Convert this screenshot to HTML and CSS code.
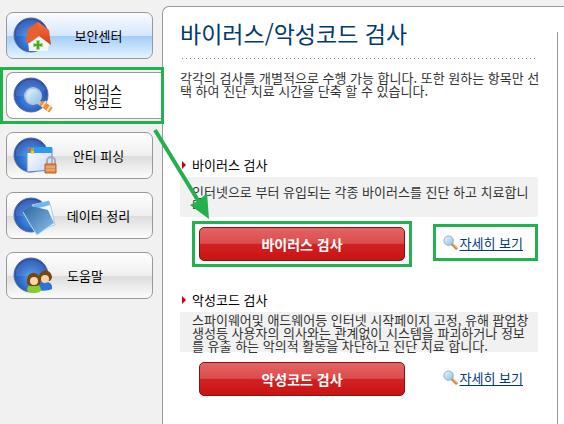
FILE: index.html
```
<!DOCTYPE html>
<html lang="ko">
<head>
    <meta charset="UTF-8">
    <meta name="viewport" content="width=device-width, initial-scale=1.0">
    <title>바이러스/악성코드 검사</title>
    <link rel="stylesheet" href="styles.css">
</head>
<body>
    <!-- shared gradients and symbols -->
    <svg class="defs" width="0" height="0" aria-hidden="true">
        <defs>
            <radialGradient id="globe" cx="0.5" cy="0.6" r="0.6">
                <stop offset="0" stop-color="#4fa3ea"/>
                <stop offset="0.5" stop-color="#2f6fd0"/>
                <stop offset="1" stop-color="#2147a4"/>
            </radialGradient>
            <linearGradient id="roof" x1="0" y1="0" x2="0" y2="1">
                <stop offset="0" stop-color="#f7703a"/>
                <stop offset="1" stop-color="#d2401a"/>
            </linearGradient>
            <linearGradient id="glass" x1="0" y1="0" x2="1" y2="1">
                <stop offset="0" stop-color="#f0faff"/>
                <stop offset="1" stop-color="#7fbfe6"/>
            </linearGradient>
            <linearGradient id="folder" x1="0" y1="0" x2="1" y2="1">
                <stop offset="0" stop-color="#2f679f"/>
                <stop offset="1" stop-color="#8cc2ee"/>
            </linearGradient>
            <linearGradient id="window" x1="0" y1="0" x2="1" y2="1">
                <stop offset="0" stop-color="#ffffff"/>
                <stop offset="1" stop-color="#c9d3fb"/>
            </linearGradient>
            <symbol id="ball" viewBox="0 0 44 40">
                <circle cx="18" cy="19" r="17" fill="url(#globe)" stroke="#5b6d96" stroke-width="1"/>
                <path d="M3 14a16 16 0 0 1 30 0c-9 6-19 7-30 6z" fill="#ffffff" opacity="0.1"/>
            </symbol>
            <symbol id="lens" viewBox="0 0 16 16">
                <path d="M9 9l6 6" stroke="#d9823b" stroke-width="3"/>
                <path d="M10 9l5 5" stroke="#f8c48c" stroke-width="1"/>
                <circle cx="6" cy="6" r="5" fill="url(#glass)" stroke="#93a9b8" stroke-width="1"/>
            </symbol>
        </defs>
    </svg>

    <div class="layout">
        <nav class="menu">
            <button type="button" class="menu-btn home">
                <svg class="icon" viewBox="0 0 44 40" aria-hidden="true">
                    <use href="#ball"/>
                    <path d="M15 25l10-7 11 9-1 8-19 0z" fill="#f4f5f7"/>
                    <path d="M25 6l11 8 2 15-12-9-10 7-3-1 2-13z" fill="url(#roof)"/>
                    <path d="M25 6l-10 7-2 13 3 1 10-7z" fill="#e85f30"/>
                    <path d="M25 24v10M20 29h10" stroke="#a5e07c" stroke-width="4"/>
                    <path d="M25 25v8M21 29h8" stroke="#4ba52a" stroke-width="2"/>
                </svg>
                <span class="label">보안센터</span>
            </button>
            <button type="button" class="menu-btn active" aria-current="page">
                <svg class="icon" viewBox="0 0 44 40" aria-hidden="true">
                    <use href="#ball"/>
                    <path d="M25 26l5 3" stroke="#b9c3cf" stroke-width="4"/>
                    <path d="M28 27l10 7" stroke="#f18a35" stroke-width="6"/>
                    <path d="M29 31l4-6M34 35l4-6" stroke="#fbe0bd" stroke-width="2"/>
                    <circle cx="20" cy="20" r="8" fill="url(#glass)" stroke="#b5c3d4" stroke-width="2"/>
                </svg>
                <span class="label">바이러스<br>악성코드</span>
            </button>
            <button type="button" class="menu-btn">
                <svg class="icon" viewBox="0 0 44 40" aria-hidden="true">
                    <use href="#ball"/>
                    <path d="M14 12h25v22l-25 2z" fill="url(#window)" stroke="#4f8fe0" stroke-width="1"/>
                    <path d="M14 11h25v6h-25z" fill="#2c9af0"/>
                    <path d="M15 12h3v3h-3z" fill="#ee5a2c"/>
                    <path d="M18 12h3v3h-3z" fill="#7cc142"/>
                    <path d="M18 15h3v3h-3z" fill="#f7d038"/>
                    <path d="M34 28v-3a4 4 0 0 1 8 0v3" fill="none" stroke="#a7abb2" stroke-width="2"/>
                    <path d="M32 28h11v9h-11z" fill="#e08a4c" stroke="#b5612b" stroke-width="1"/>
                    <path d="M33 31h9M33 34h9" stroke="#f3bd8e" stroke-width="1"/>
                </svg>
                <span class="label">안티 피싱</span>
            </button>
            <button type="button" class="menu-btn">
                <svg class="icon" viewBox="0 0 44 40" aria-hidden="true">
                    <use href="#ball"/>
                    <path d="M19 9l17-4 2 6 4 18-14 4z" fill="#f2f8fd" stroke="#a8cdea" stroke-width="1"/>
                    <path d="M20 9l16-4 1 4-15 4z" fill="#6db8f2"/>
                    <path d="M18 10l17 4 6 13-17 12-7-10-7-14z" fill="url(#folder)"/>
                    <path d="M10 16l8 14 6 9 17-12" fill="none" stroke="#b9dcf6" stroke-width="1"/>
                </svg>
                <span class="label">데이터 정리</span>
            </button>
            <button type="button" class="menu-btn help">
                <svg class="icon" viewBox="0 0 44 40" aria-hidden="true">
                    <use href="#ball"/>
                    <path d="M25 32c0-8 14-8 14-1v2c-4 2-10 2-14 1z" fill="#2d73dc"/>
                    <path d="M26 22c0-10 13-10 13 0l-2 3h-9z" fill="#7c4410"/>
                    <circle cx="32" cy="23" r="4" fill="#fbd6a4"/>
                    <path d="M14 34c0-8 14-8 14 0 0 4-14 4-14 0z" fill="#86cc2e"/>
                    <path d="M14 28c-2-15 15-15 13 0l-3 2h-7z" fill="#7c4410"/>
                    <circle cx="21" cy="25" r="4" fill="#fbd6a4"/>
                </svg>
                <span class="label">도움말</span>
            </button>
        </nav>

        <main class="panel">
            <div class="content">
                <h1>바이러스/악성코드 검사</h1>
                <p class="intro">각각의 검사를 개별적으로 수행 가능 합니다. 또한 원하는 항목만 선<br>택 하여 진단 치료 시간을 단축 할 수 있습니다.</p>

                <section class="scan">
                    <h2>바이러스 검사</h2>
                    <p class="desc short">인터넷으로 부터 유입되는 각종 바이러스를 진단 하고 치료합니<br>다.</p>
                    <div class="actions">
                        <div class="scan-action marked">
                            <button type="button" class="scan-btn">바이러스 검사</button>
                        </div>
                        <div class="more marked">
                            <a href="#virus"><svg class="lens" aria-hidden="true"><use href="#lens"/></svg><span>자세히 보기</span></a>
                        </div>
                    </div>
                </section>

                <section class="scan">
                    <h2>악성코드 검사</h2>
                    <p class="desc">스파이웨어및 애드웨어등 인터넷 시작페이지 고정, 유해 팝업창<br>생성등 사용자의 의사와는 관계없이 시스템을 파괴하거나 정보<br>를 유출 하는 악의적 활동을 차단하고 진단 치료 합니다.</p>
                    <div class="actions">
                        <div class="scan-action">
                            <button type="button" class="scan-btn">악성코드 검사</button>
                        </div>
                        <div class="more">
                            <a href="#malware"><svg class="lens" aria-hidden="true"><use href="#lens"/></svg><span>자세히 보기</span></a>
                        </div>
                    </div>
                </section>
            </div>
            <div class="edge"></div>
        </main>

        <!-- arrow from the menu to the scan button -->
        <svg class="arrow" viewBox="0 0 58 94" aria-hidden="true">
            <path d="M2 2L46 74" stroke="#22b14c" stroke-width="4"/>
            <path d="M56 91L37 77l8-4 9-8z" fill="#22b14c"/>
        </svg>
    </div>
</body>
</html>
```

FILE: styles.css
```
* {
    box-sizing: border-box;
}

body {
    margin: 0;
    background: #f1f1f1;
    color: #333;
    font-family: "Noto Sans CJK KR", sans-serif;
    font-size: 13px;
    line-height: 13px;
}

button {
    font-family: inherit;
    cursor: pointer;
}

h1, h2, p {
    margin: 0;
    font-weight: normal;
}

.defs {
    position: absolute;
}

.layout {
    position: relative;
    display: flex;
    min-height: 100vh;
    overflow: hidden;
}

/* left menu */
.menu {
    flex: none;
    display: flex;
    flex-direction: column;
    gap: 13px;
    width: 162px;
    padding: 12px 9px 12px 6px;
}

.menu-btn {
    display: flex;
    align-items: center;
    height: 47px;
    padding: 0 12px 0 6px;
    border: 1px solid #999;
    border-radius: 7px;
    background: linear-gradient(#fff, #efefef 50%, #dcdcdc 51%, #fcfcfc);
    color: #000;
    font-size: 13px;
    line-height: 13px;
}

.menu-btn.home {
    background: linear-gradient(#fafcff, #d5e7fb 50%, #a3cdf7 51%, #e4f4ff);
}

.menu-btn.active {
    position: relative;
    z-index: 1;
    margin-right: -10px;
    padding-right: 24px;
    border-right: none;
    border-radius: 7px 0 0 7px;
    background: #fff;
}

.menu-btn.active::after {
    content: "";
    position: absolute;
    inset: -6px -1px -6px -7px;
    border: 3px solid #22b14c;
}

.icon {
    flex: none;
    width: 44px;
    height: 40px;
}

.label {
    flex: 1;
    text-align: center;
}

.help .label {
    padding-left: 10px;
    text-align: left;
}

/* right panel */
.panel {
    flex: 1;
    display: flex;
    min-width: 0;
    margin-top: 6px;
    border: 1px solid #999;
    border-width: 1px 0 0 1px;
    border-radius: 7px 0 0 0;
    background: #fff;
}

.content {
    flex: 1;
    min-width: 0;
    padding: 13px 19px 0 17px;
}

.edge {
    flex: none;
    width: 7px;
    margin-top: 25px;
    border-left: 1px solid #999;
}

h1 {
    height: 39px;
    color: #003a70;
    font-size: 23px;
    line-height: 26px;
    background: repeating-linear-gradient(90deg, transparent 0 2px, #888 2px 3px, transparent 3px 4px) left bottom / 100% 1px no-repeat;
}

.intro {
    margin-top: 12px;
    white-space: nowrap;
}

h2 {
    position: relative;
    padding-left: 12px;
    color: #000;
    font-size: 13px;
    line-height: 18px;
}

h2::before {
    content: "";
    position: absolute;
    left: 2px;
    top: 5px;
    border: 4px solid transparent;
    border-left-color: #c00;
    border-right: none;
}

.scan {
    margin-top: 30px;
}

.intro + .scan {
    margin-top: 59px;
}

.desc {
    min-height: 40px;
    margin-top: 3px;
    padding: 1px 0 0 12px;
    border-radius: 2px;
    background: #f1f1f1;
    white-space: nowrap;
}

.desc.short {
    padding-top: 8px;
}

.actions {
    display: flex;
    align-items: flex-start;
    justify-content: space-between;
    margin-top: 10px;
    padding: 0 15px 0 19px;
}

.scan-action {
    position: relative;
    flex: 0 1 206px;
}

.scan-btn {
    display: block;
    width: 100%;
    height: 34px;
    padding: 0;
    border: 1px solid #841414;
    border-radius: 5px;
    background: linear-gradient(#e36464, #dc4c4c 48%, #d02323 50%, #cc1212);
    color: #fff;
    font-size: 14px;
    font-weight: bold;
}

.more {
    position: relative;
    margin-top: 8px;
}

.more a {
    display: flex;
    align-items: center;
    gap: 2px;
    color: #003a7d;
    text-decoration: none;
}

.more span {
    text-decoration: underline;
    text-underline-offset: 2px;
}

.lens {
    width: 15px;
    height: 15px;
}

/* green frames */
.marked::after {
    content: "";
    position: absolute;
    inset: -6px -7px;
    border: 3px solid #22b14c;
    pointer-events: none;
}

.more.marked::after {
    inset: -11px -15px -11px -10px;
}

.arrow {
    position: absolute;
    left: 153px;
    top: 128px;
    width: 58px;
    height: 94px;
    pointer-events: none;
}
```
